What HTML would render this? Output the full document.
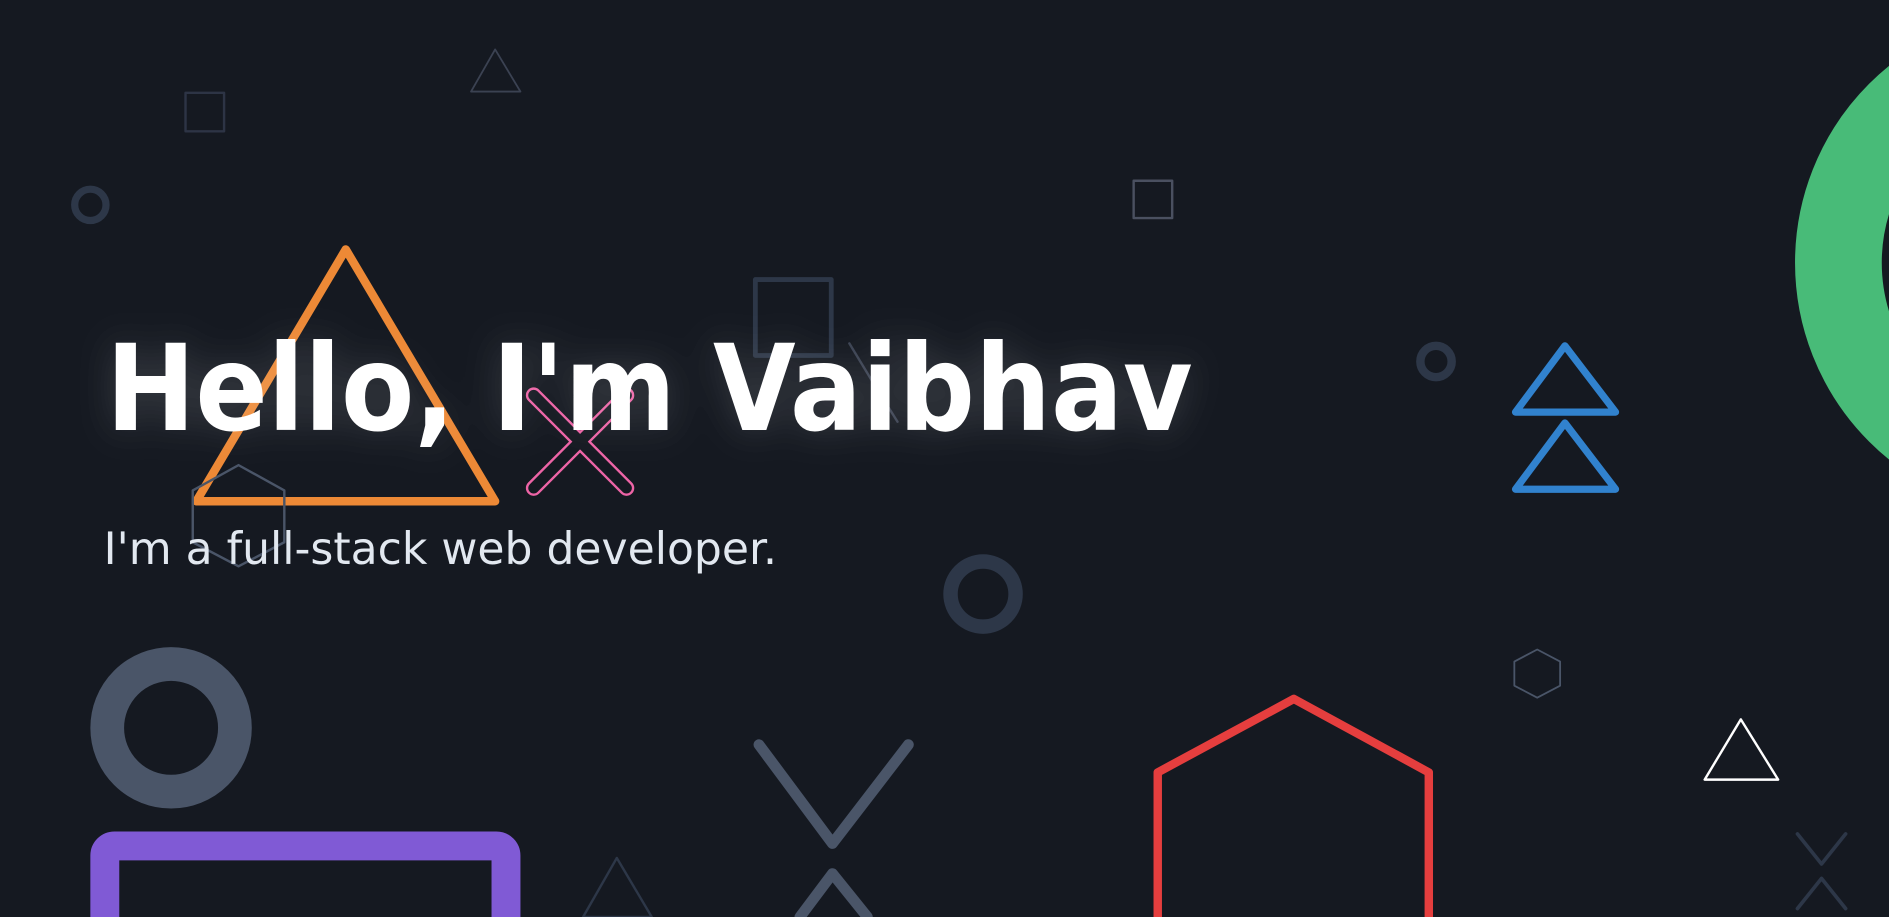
<!DOCTYPE html>
<html><head><meta charset="utf-8"><style>
html,body{margin:0;padding:0;background:#151921;overflow:hidden;width:1889px;height:917px}
svg{display:block;position:absolute;left:0;top:0}
</style></head><body>
<svg width="1889" height="917" viewBox="0 0 1568 761" preserveAspectRatio="none" xmlns="http://www.w3.org/2000/svg" overflow="hidden">
<defs>
<filter id="glow" x="-20%" y="-50%" width="140%" height="200%">
<feGaussianBlur in="SourceAlpha" stdDeviation="16" result="b"/>
<feFlood flood-color="#ffffff" flood-opacity="0.09"/>
<feComposite in2="b" operator="in" result="g"/>
<feMerge><feMergeNode in="g"/><feMergeNode in="g"/><feMergeNode in="SourceGraphic"/></feMerge>
</filter>
</defs>
<rect width="1568" height="761" fill="#151921"/>
<g fill="none" stroke-linejoin="round" stroke-linecap="round">
<rect x="154" y="77" width="32" height="32" stroke="#2d3445" stroke-width="2"/>
<polygon points="411,41 391,76 432,76" stroke="#3b4252" stroke-width="1.5"/>
<circle cx="75" cy="170" r="13" stroke="#2d3748" stroke-width="6"/>
<rect x="941" y="150" width="32" height="31" stroke="#4a5060" stroke-width="2"/>
<rect x="627" y="232" width="63" height="63" stroke="#2d3748" stroke-width="4"/>
<polyline points="705,285 725,318 745,350" stroke="#3b4252" stroke-width="2"/>
<polygon points="287,207 163,416 411,416" stroke="#ed8936" stroke-width="7"/>
<line x1="443" y1="405" x2="520" y2="328" stroke="#ed64a6" stroke-width="13"/>
<line x1="443" y1="328" x2="520" y2="405" stroke="#ed64a6" stroke-width="13"/>
<line x1="443" y1="405" x2="520" y2="328" stroke="#151921" stroke-width="9"/>
<line x1="443" y1="328" x2="520" y2="405" stroke="#151921" stroke-width="9"/>
<polygon points="198,386 236,407 236,450 198,470 160,450 160,407" stroke="#4a5568" stroke-width="2"/>
<circle cx="1192" cy="300" r="13" stroke="#2d3748" stroke-width="7"/>
<polygon points="1299,287 1258,342 1341,342" stroke="#3182ce" stroke-width="6"/>
<polygon points="1299,351 1258,406 1341,406" stroke="#3182ce" stroke-width="6"/>
<circle cx="816" cy="493" r="27" stroke="#2d3748" stroke-width="12"/>
<polygon points="1276,539 1295,549 1295,569 1276,579 1257,569 1257,549" stroke="#4a5568" stroke-width="1.5"/>
<polygon points="1445,597 1415,647 1476,647" stroke="#ffffff" stroke-width="2"/>
<polyline points="1492,692 1512,717 1532,692" stroke="#2d3748" stroke-width="3"/>
<polyline points="1492,754 1512,729 1532,754" stroke="#2d3748" stroke-width="3"/>
<circle cx="142" cy="604" r="53" stroke="#4a5568" stroke-width="28"/>
<rect x="87" y="702" width="333" height="120" rx="8" stroke="#805ad5" stroke-width="24"/>
<polygon points="512,712 484,761 541,761" stroke="#2d3748" stroke-width="2"/>
<polyline points="630,618 691,700 754,618" stroke="#4a5568" stroke-width="9"/>
<polyline points="664,761 691,725 720,761" stroke="#4a5568" stroke-width="9"/>
<polyline points="961,800 961,641 1074,580 1186,641 1186,800" stroke="#e53e3e" stroke-width="7"/>
<circle cx="1700" cy="218" r="174" stroke="#48bb78" stroke-width="72"/>
</g>
<text x="88" y="357" font-family="DejaVu Sans, Liberation Sans, sans-serif" font-weight="bold" font-size="99" fill="#ffffff" textLength="902" lengthAdjust="spacingAndGlyphs" filter="url(#glow)">Hello, I'm Vaibhav</text>
<text x="86" y="468" font-family="DejaVu Sans, Liberation Sans, sans-serif" font-size="37" fill="#e2e8f0" textLength="559" lengthAdjust="spacingAndGlyphs">I'm a full-stack web developer.</text>
</svg>
</body></html>
